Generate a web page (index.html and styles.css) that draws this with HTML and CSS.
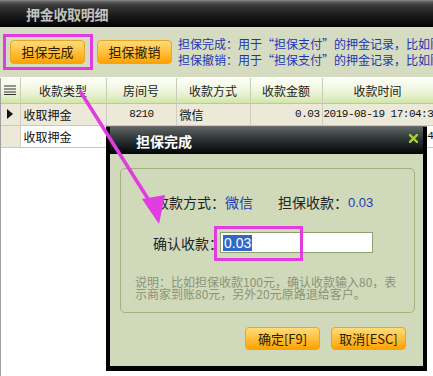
FILE: index.html
```html
<!DOCTYPE html>
<html lang="zh-CN">
<head>
<meta charset="utf-8">
<title>押金收取明细</title>
<link rel="stylesheet" href="styles.css">
</head>
<body>
<div class="app">
  <div class="titlebar"><span>押金收取明细</span></div>
  <div class="toolbar">
    <div class="hl-frame"><button class="btn">担保完成</button></div>
    <button class="btn btn-second">担保撤销</button>
    <div class="help">
      <div>担保完成：用于“担保支付”的押金记录，比如顾客</div>
      <div>担保撤销：用于“担保支付”的押金记录，比如顾客</div>
    </div>
  </div>
  <div class="grid">
    <table class="tbl">
      <colgroup>
        <col class="c0"><col class="c1"><col class="c2"><col class="c3"><col class="c4"><col class="c5">
      </colgroup>
      <thead>
        <tr>
          <th class="ind"><svg width="12" height="10" viewBox="0 0 12 10"><path d="M0 1h12M0 4h12M0 7h12M0 9.5h12" stroke="#333" stroke-width="1.2"/></svg></th>
          <th>收款类型</th><th>房间号</th><th>收款方式</th><th>收款金额</th><th>收款时间</th>
        </tr>
      </thead>
      <tbody>
        <tr class="sel-row">
          <td class="ind"><svg width="6" height="10" viewBox="0 0 6 10"><path d="M0 0L6 5L0 10Z" fill="#111"/></svg></td>
          <td>收取押金</td><td class="ctr num">8210</td><td>微信</td><td class="rt num">0.03</td><td class="num">2019-08-19 17:04:32</td>
        </tr>
        <tr>
          <td class="ind"></td>
          <td>收取押金</td><td class="ctr num">8210</td><td>微信</td><td class="rt num">0.03</td><td class="num">2019-08-19 17:04:45</td>
        </tr>
      </tbody>
    </table>
  </div>

  <div class="dialog">
    <div class="dlg-title">
      <span>担保完成</span>
      <svg class="close" width="9" height="9" viewBox="0 0 9 9"><path d="M1 1L8 8M8 1L1 8" stroke="#a6d03c" stroke-width="2.4" stroke-linecap="square"/></svg>
    </div>
    <div class="dlg-body">
      <div class="group">
        <div class="info-row">
          <span class="lbl">收款方式：</span><span class="val">微信</span>
          <span class="lbl lbl2">担保收款：</span><span class="val num-val">0.03</span>
        </div>
        <div class="input-row">
          <span class="lbl lbl-confirm">确认收款：</span>
          <div class="input-wrap">
            <div class="input"><span class="selected">0.03</span></div>
            <div class="hl-box"></div>
          </div>
        </div>
        <div class="note">说明：比如担保收款100元，确认收款输入80，表<br>示商家到账80元，另外20元原路退给客户。</div>
      </div>
      <div class="dlg-actions">
        <button class="btn btn-dlg">确定[F9]</button>
        <button class="btn btn-dlg">取消[ESC]</button>
      </div>
    </div>
  </div>

  <svg class="arrow" width="433" height="376" viewBox="0 0 433 376">
    <line x1="80" y1="91" x2="150" y2="202" stroke="#e03ce0" stroke-width="3.5"/>
    <polygon points="142,199 165,195 159,224" fill="#e03ce0"/>
  </svg>
</div>
</body>
</html>
```

FILE: styles.css
```css
* { box-sizing: border-box; }

html, body {
  margin: 0;
  padding: 0;
  background: #fff;
}

body {
  font-family: "Noto Sans CJK SC", "Noto Sans", sans-serif;
}

.app {
  position: relative;
  width: 433px;
  height: 376px;
  overflow: hidden;
  display: flex;
  flex-direction: column;
}

/* page title bar */
.titlebar {
  height: 27px;
  flex: none;
  display: flex;
  align-items: center;
  padding-left: 26px;
  background: linear-gradient(#8a8a8a 0, #5a5a5a 2px, #3a3a3a 5px, #1e1e1e 14px, #020202 27px);
  color: #c2c2c2;
  font-weight: bold;
  font-size: 14px;
  letter-spacing: -0.3px;
}

/* toolbar */
.toolbar {
  height: 51px;
  flex: none;
  display: flex;
  align-items: center;
  padding-left: 3px;
  padding-bottom: 1px;
  background: #d6dcc2;
  border-bottom: 1px solid #fff;
}

.hl-frame {
  border: 3px solid #e03ce0;
  padding: 3px 5px 3px 4px;
  display: flex;
}

.btn {
  width: 75px;
  height: 24px;
  padding: 0;
  border: 1px solid #eaa426;
  border-radius: 4px;
  background: linear-gradient(#ffdc78, #ffbd38 55%, #ffa200);
  font-family: "Noto Sans CJK SC", sans-serif;
  font-size: 13px;
  color: #2a2000;
  line-height: 20px;
}

.btn-second {
  margin-left: 4px;
}

.help {
  flex: 1;
  min-width: 0;
  margin-left: 6px;
  color: #1c36b4;
  font-size: 12px;
  line-height: 16px;
  white-space: nowrap;
  overflow: hidden;
}

/* grid */
.grid {
  flex: 1;
  border-left: 1px solid #a0a0a0;
  background: #fff;
}

.tbl {
  width: 432px;
  table-layout: fixed;
  border-collapse: collapse;
  font-size: 12px;
  color: #111;
}

.c0 { width: 19px; }
.c1 { width: 86px; }
.c2 { width: 70px; }
.c3 { width: 74px; }
.c4 { width: 72px; }
.c5 { width: 111px; }

.tbl th {
  height: 25px;
  padding: 0;
  font-weight: normal;
  color: #222;
  background: linear-gradient(#fdfef8, #eef4dc 55%, #d0e6a8);
  border-right: 1px solid #c8ccb8;
  border-bottom: 1px solid #c0c4b0;
  text-align: center;
  white-space: nowrap;
  overflow: hidden;
}

.tbl td {
  height: 22px;
  padding: 0 2px 0 3px;
  border-right: 1px solid #d0cec4;
  border-bottom: 1px solid #c8c8c0;
  white-space: nowrap;
  overflow: hidden;
}

.tbl .ind {
  padding: 0;
  text-align: center;
  background: #ece9d8;
}

.tbl th.ind {
  background: linear-gradient(#fdfef8, #eef4dc 55%, #d0e6a8);
}

.tbl .ind svg {
  display: block;
  margin: 0 auto;
}

.sel-row td {
  background: #ece9d8;
}

.ctr { text-align: center; }
.rt { text-align: right; }

.num {
  font-family: "Liberation Mono", monospace;
  font-size: 11px;
  letter-spacing: -0.5px;
}

.tbl td.num:last-child {
  padding-left: 1px;
}

/* dialog */
.dialog {
  position: absolute;
  left: 106px;
  top: 126px;
  width: 321px;
  height: 245px;
  background: #000;
  padding: 0 4px 5px;
  display: flex;
  flex-direction: column;
  border-top: 1px solid #6a6a6a;
}

.dlg-title {
  height: 27px;
  flex: none;
  display: flex;
  align-items: center;
  padding-left: 26px;
  padding-right: 5px;
  background: linear-gradient(#5c6464, #3c4444 30%, #1a1e1e 70%, #040404);
  color: #fff;
  font-weight: bold;
  font-size: 14px;
}

.close {
  margin-left: auto;
  margin-top: -4px;
}

.dlg-body {
  flex: 1;
  background: #d1d9bb;
  padding: 14px 8px 0 10px;
  display: flex;
  flex-direction: column;
}

.group {
  height: 145px;
  border: 1px solid #a3b17a;
  border-radius: 5px;
  padding-top: 23px;
}

.info-row {
  height: 20px;
  display: flex;
  align-items: center;
  padding-left: 34px;
  font-size: 14px;
  color: #222;
  white-space: nowrap;
}

.val {
  color: #1c3cb0;
}

.lbl2 {
  margin-left: 25px;
}

.num-val {
  font-family: "Liberation Sans", sans-serif;
  font-size: 13px;
}

.input-row {
  margin-top: 20px;
  height: 21px;
  display: flex;
  align-items: center;
  padding-left: 32px;
  font-size: 14px;
  color: #222;
}

.lbl-confirm {
  width: 67px;
  white-space: nowrap;
  flex: none;
}

.input-wrap {
  position: relative;
}

.input {
  width: 153px;
  height: 21px;
  background: #fff;
  border: 1px solid #8fa070;
  padding: 1px 2px;
  display: flex;
  align-items: center;
}

.selected {
  background: #3168c8;
  color: #fff;
  font-family: "Liberation Sans", sans-serif;
  font-size: 14px;
  line-height: 16px;
  padding: 0 1px;
}

.hl-box {
  position: absolute;
  left: -6px;
  top: -6px;
  width: 89px;
  height: 35px;
  border: 3px solid #e03ce0;
}

.note {
  margin-top: 23px;
  padding-left: 14px;
  font-size: 12px;
  line-height: 11.5px;
  color: #8c9278;
  white-space: nowrap;
}

.dlg-actions {
  display: flex;
  justify-content: flex-end;
  gap: 11px;
  margin-top: 14px;
  padding-right: 9px;
}

.btn-dlg {
  height: 23px;
}

.arrow {
  position: absolute;
  left: 0;
  top: 0;
  pointer-events: none;
}
```
